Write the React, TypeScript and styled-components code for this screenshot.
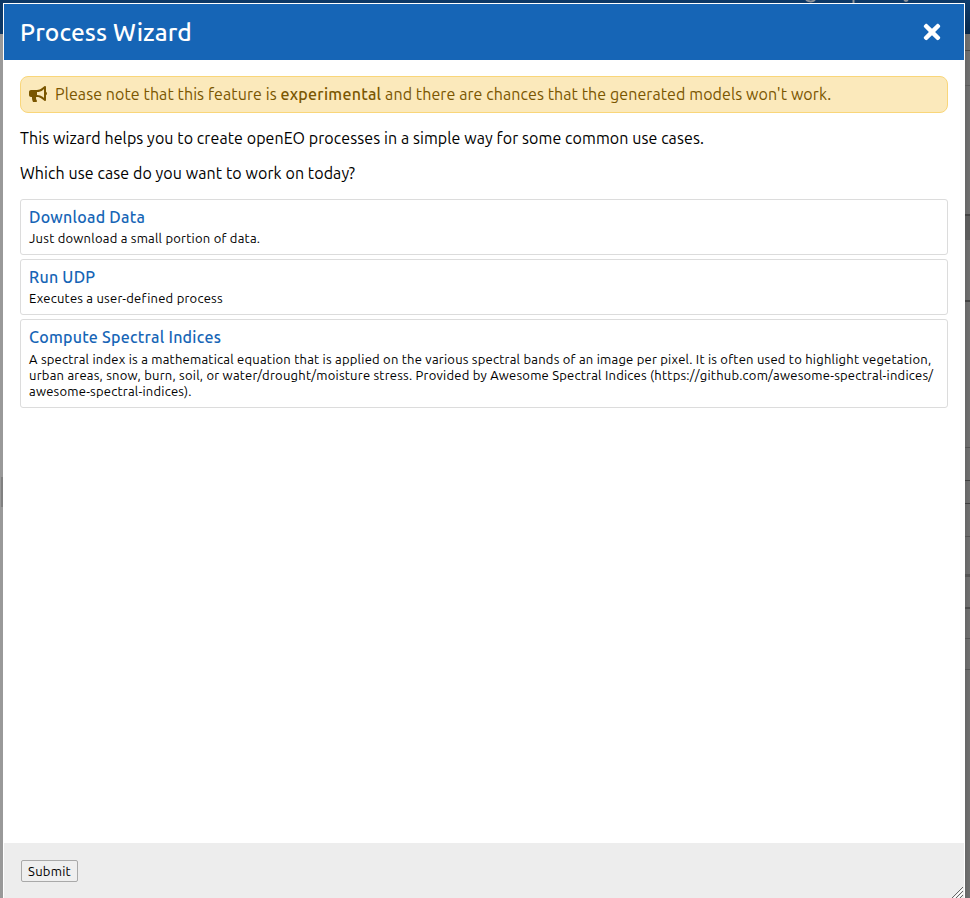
import React from "react";
import styled, { createGlobalStyle } from "styled-components";
import { FaBullhorn, FaTimes } from "react-icons/fa";

const GlobalStyle = createGlobalStyle`
  * { box-sizing: border-box; }
  html, body, #root { height: 100%; }
  body { margin: 0; overflow: hidden; background: #999; color: #000;
    font: 16px/20px Ubuntu, "Noto Sans", sans-serif; }
`;

const Screen = styled.div`
  position: relative;
  height: 898px;
  width: 970px;
  overflow: hidden;
`;

const Backdrop = styled.div`
  position: absolute;
  inset: 0;
  display: grid;
  grid-template: 34px 1fr / 1fr 6px;
`;

const TopBar = styled.div`
  grid-column: 1 / -1;
  background: linear-gradient(to right, #0d3866 0 965px, transparent 965px),
    linear-gradient(#0e3c6d, #09284a);
`;

const TopBarArt = styled.svg`
  display: block;
`;

const LeftPane = styled.div`
  background: #999;
  padding-top: 443px;
`;

const SplitHandle = styled.div`
  width: 2px;
  height: 30px;
  margin-left: 1px;
  background: #808080;
`;

const RightPane = styled.div`
  background: linear-gradient(to right, #666, #707070);
`;

const Rule = styled.div<{ $gap: number; $size: number; $color: string }>`
  height: ${(p) => p.$gap + p.$size}px;
  border-bottom: ${(p) => p.$size}px solid ${(p) => p.$color};
`;

const Dialog = styled.section`
  position: absolute;
  left: 3px;
  top: 3px;
  width: 962px;
  height: 897px;
  display: flex;
  flex-direction: column;
  background: #fff;
  border: 1px solid #fff;
`;

const Header = styled.header`
  height: 56px;
  flex: none;
  display: flex;
  align-items: center;
  justify-content: space-between;
  padding: 0 20px 0 16px;
  background: #1665b6;
  color: #fff;
`;

const Title = styled.h2`
  margin: 0;
  font-size: 24.5px;
  line-height: 32px;
  font-weight: 500;
  letter-spacing: 0.12px;
  white-space: nowrap;
`;

const CloseButton = styled.button`
  display: flex;
  padding: 0;
  border: 0;
  background: none;
  color: #fff;
`;

const Body = styled.main`
  flex: 1;
  padding: 16px;
`;

const Notice = styled.div`
  height: 37px;
  display: flex;
  align-items: center;
  gap: 8px;
  padding: 0 8px 1px;
  border: 1px solid #f9d67a;
  border-radius: 8px;
  background: #fbe9bb;
  color: #7a5600;
  white-space: nowrap;
  letter-spacing: 0.085px;
  strong {
    font-weight: 500;
    letter-spacing: 0.28px;
  }
`;

const NoticeIcon = styled(FaBullhorn)`
  width: 18px;
  height: 16px;
`;

const Paragraph = styled.p`
  margin: 15px 0;
  height: 20px;
  white-space: nowrap;
  letter-spacing: 0.085px;
`;

const Options = styled.div`
  display: grid;
  gap: 4px;
  margin-top: 16px;
`;

const Option = styled.article`
  padding: 7px 8px 8px;
  border: 1px solid #dcdcdc;
  border-radius: 3px;
`;

const OptionTitle = styled.h3`
  margin: 0 0 3px;
  font-size: 16px;
  line-height: 20px;
  font-weight: 500;
  color: #1665b6;
  letter-spacing: 0.25px;
`;

const OptionText = styled.div<{ $multiline: boolean }>`
  padding-top: ${(p) => (p.$multiline ? 1 : 0)}px;
  font-size: 13px;
  line-height: 16px;
  white-space: nowrap;
  letter-spacing: 0.224px;
`;

const Footer = styled.footer`
  position: relative;
  height: 56px;
  flex: none;
  padding: 17px;
  background: #ededed;
`;

const Submit = styled.button`
  display: block;
  width: 57px;
  height: 22px;
  padding: 0;
  border: 1px solid #a9a9a9;
  border-radius: 2px;
  background: #efefef;
  color: #000;
  font: 13px/18px Ubuntu, "Noto Sans", sans-serif;
  letter-spacing: 0.25px;
  white-space: nowrap;
`;

const Grip = styled.svg`
  position: absolute;
  right: 1px;
  bottom: 1px;
`;

const rules = [
  [16, 1, "#494949"], [34, 1, "#5c5c5c"], [128, 2, "#444"], [0, 24, "#5c5c5c"],
  [60, 2, "#444"], [145, 1, "#555"], [32, 1, "#404040"], [22, 1, "#404040"],
  [32, 1, "#555"], [37, 3, "#555"], [30, 2, "#4d4d4d"], [29, 1, "#555"], [30, 1, "#555"],
] as const;

const options = [
  { title: "Download Data", lines: ["Just download a small portion of data."] },
  { title: "Run UDP", lines: ["Executes a user-defined process"] },
  {
    title: "Compute Spectral Indices",
    lines: [
      "A spectral index is a mathematical equation that is applied on the various spectral bands of an image per pixel. It is often used to highlight vegetation,",
      "urban areas, snow, burn, soil, or water/drought/moisture stress. Provided by Awesome Spectral Indices (https://github.com/awesome-spectral-indices/",
      "awesome-spectral-indices).",
    ],
  },
];

export default function App() {
  return (
    <Screen>
      <GlobalStyle />
      <Backdrop>
        <TopBar>
          <TopBarArt width="970" height="34">
            <path d="M806 0q5 3 9 0M904 0l2 1 2-1" fill="none" stroke="#8b9199" strokeWidth="2" />
            <path d="M853.500 0v3" stroke="#8b9199" strokeWidth="2" />
          </TopBarArt>
        </TopBar>
        <LeftPane><SplitHandle /></LeftPane>
        <RightPane>
          {rules.map(([gap, size, color], i) => <Rule key={i} $gap={gap} $size={size} $color={color} />)}
        </RightPane>
      </Backdrop>
      <Dialog role="dialog">
        <Header>
          <Title>Process Wizard</Title>
          <CloseButton aria-label="Close"><FaTimes size={24} viewBox="-80 0 512 512" /></CloseButton>
        </Header>
        <Body>
          <Notice>
            <NoticeIcon />
            <span>Please note that this feature is <strong>experimental</strong> and there are chances that the generated models won't work.</span>
          </Notice>
          <Paragraph>This wizard helps you to create openEO processes in a simple way for some common use cases.</Paragraph>
          <Paragraph>Which use case do you want to work on today?</Paragraph>
          <Options>
            {options.map((o) => (
              <Option key={o.title}>
                <OptionTitle>{o.title}</OptionTitle>
                <OptionText $multiline={o.lines.length > 1}>
                  {o.lines.map((text) => <div key={text}>{text}</div>)}
                </OptionText>
              </Option>
            ))}
          </Options>
        </Body>
        <Footer>
          <Submit>Submit</Submit>
          <Grip width="11" height="11" viewBox="0 0 11 11" fill="none">
            <path d="M2 11l9-9M6 11l5-5" stroke="#fff" />
            <path d="M0 11L11 0M4 11l7-7M8 11l3-3" stroke="#666" />
          </Grip>
        </Footer>
      </Dialog>
    </Screen>
  );
}
